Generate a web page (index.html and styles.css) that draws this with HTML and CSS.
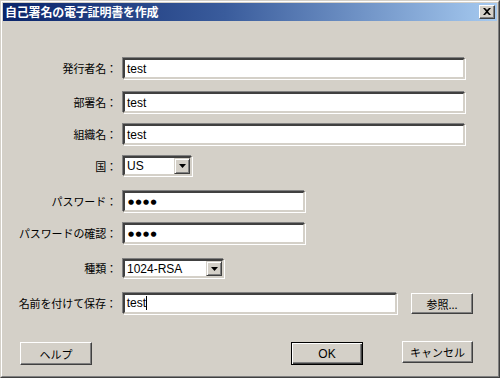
FILE: index.html
```html
<!DOCTYPE html>
<html lang="ja">
<head>
<meta charset="utf-8">
<title>自己署名の電子証明書を作成</title>
<link rel="stylesheet" href="styles.css">
</head>
<body>
<div class="window">
  <div class="frame">
    <div class="titlebar">
      <span class="title">自己署名の電子証明書を作成</span>
      <span class="close" aria-label="閉じる">
        <svg width="8" height="7" viewBox="0 0 8 7"><path d="M0 0h2l2 2 2-2h2L5 3.5 8 7H6L4 5 2 7H0l3-3.5z" fill="#000"/></svg>
      </span>
    </div>
    <div class="content">
      <div class="form">
        <div class="row">
          <label class="lbl">発行者名：</label>
          <div class="field w-full"><span class="val">test</span></div>
        </div>
        <div class="row mt2">
          <label class="lbl">部署名：</label>
          <div class="field w-full"><span class="val">test</span></div>
        </div>
        <div class="row">
          <label class="lbl">組織名：</label>
          <div class="field w-full"><span class="val">test</span></div>
        </div>
        <div class="row">
          <label class="lbl">国：</label>
          <div class="combo w-country">
            <span class="val">US</span>
            <span class="arrow"><svg width="7" height="4" viewBox="0 0 7 4"><path d="M0 0h7L3.5 4z" fill="#000"/></svg></span>
          </div>
        </div>
        <div class="row mt4">
          <label class="lbl">パスワード：</label>
          <div class="field w-pass"><span class="dots">●●●●</span></div>
        </div>
        <div class="row">
          <label class="lbl">パスワードの確認：</label>
          <div class="field w-pass"><span class="dots">●●●●</span></div>
        </div>
        <div class="row mt4">
          <label class="lbl">種類：</label>
          <div class="combo w-type short">
            <span class="val">1024-RSA</span>
            <span class="arrow"><svg width="7" height="4" viewBox="0 0 7 4"><path d="M0 0h7L3.5 4z" fill="#000"/></svg></span>
          </div>
        </div>
        <div class="row mt3">
          <label class="lbl">名前を付けて保存：</label>
          <div class="field w-save"><span class="val">test</span><span class="caret"></span></div>
          <button class="btn browse">参照...</button>
        </div>
      </div>
      <div class="actions">
        <button class="btn">ヘルプ</button>
        <div class="spacer"></div>
        <button class="btn default">OK</button>
        <button class="btn cancel">キャンセル</button>
      </div>
    </div>
  </div>
</div>
</body>
</html>
```
FILE: styles.css
```css
* { box-sizing: border-box; }
html, body { margin: 0; padding: 0; }
body {
  width: 500px;
  height: 378px;
  background: #d4d0c8;
  font-family: "Noto Sans CJK JP", "Liberation Sans", sans-serif;
  font-size: 11px;
  color: #000;
  overflow: hidden;
}
.window {
  width: 500px;
  height: 378px;
  border: 1px solid;
  border-color: #d4d0c8 #404040 #404040 #d4d0c8;
}
.frame {
  height: 100%;
  border: 1px solid;
  border-color: #fff #808080 #808080 #fff;
  padding: 1px;
  display: flex;
  flex-direction: column;
}
.titlebar {
  height: 18px;
  flex: none;
  background: linear-gradient(to right, #0a246a 0%, #3a5c9c 45%, #a6caf0 100%);
  display: flex;
  align-items: center;
  padding: 0 2px 0 2px;
}
.title {
  flex: 1;
  color: #fff;
  font-weight: bold;
  font-size: 12px;
  line-height: 18px;
  white-space: nowrap;
  letter-spacing: -0.2px;
}
.close {
  width: 16px;
  height: 14px;
  background: #d4d0c8;
  border: 1px solid;
  border-color: #fff #404040 #404040 #fff;
  box-shadow: inset -1px -1px 0 #808080;
  display: flex;
  align-items: center;
  justify-content: center;
  padding-bottom: 1px;
}
.close svg { display: block; }
.content {
  flex: 1;
  display: flex;
  flex-direction: column;
  padding: 36px 24px 10px 17px;
}
.form {
  display: flex;
  flex-direction: column;
  gap: 10px;
}
.row {
  display: flex;
  align-items: center;
}
.mt2 { margin-top: 2px; }
.mt3 { margin-top: 3px; }
.mt4 { margin-top: 4px; }
.lbl {
  width: 99px;
  margin-left: -2px;
  margin-right: 5px;
  text-align: right;
  white-space: nowrap;
  font-size: 11px;
  letter-spacing: -0.1px;
  line-height: 14px;
}
.field, .combo {
  height: 22px;
  background: #fff;
  border: 2px solid;
  border-color: #404040 #d4d0c8 #d4d0c8 #404040;
  box-shadow: -1px -1px 0 #808080, 1px 1px 0 #fff;
  display: flex;
  align-items: center;
  padding-left: 2px;
  font-family: "Liberation Sans", "DejaVu Sans", sans-serif;
  font-size: 12px;
}
.field { margin: 1px 0 0 1px; height: 21px; }
.w-full { width: 342px; }
.w-pass { width: 182px; }
.w-save { width: 275px; }
.combo {
  margin: 1px 0 0 1px;
  height: 20px;
  padding-right: 0;
}
.combo.short { height: 19px; }
.w-country { width: 69px; }
.w-type { width: 101px; }
.combo .val { flex: 1; }
.arrow {
  width: 16px;
  height: 100%;
  background: #d4d0c8;
  border: 1px solid;
  border-color: #d4d0c8 #404040 #404040 #d4d0c8;
  box-shadow: inset 1px 1px 0 #fff, inset -1px -1px 0 #808080;
  display: flex;
  align-items: center;
  justify-content: center;
}
.arrow svg { display: block; }
.val { line-height: 14px; }
.dots {
  font-family: "DejaVu Sans", sans-serif;
  font-size: 7px;
  letter-spacing: 1.4px;
  line-height: 10px;
  padding-left: 1px;
}
.caret {
  display: inline-block;
  width: 1px;
  height: 14px;
  background: #000;
  margin-left: 0;
}
.btn {
  height: 23px;
  width: 72px;
  padding: 0;
  margin: 0;
  background: #d4d0c8;
  border: 1px solid;
  border-color: #fff #404040 #404040 #fff;
  box-shadow: inset -1px -1px 0 #808080;
  font-family: "Noto Sans CJK JP", "Liberation Sans", sans-serif;
  font-size: 11px;
  color: #000;
  line-height: 14px;
}
.browse {
  width: 62px;
  height: 21px;
  margin-left: 14px;
  margin-top: 2px;
}
.actions {
  margin-top: auto;
  display: flex;
  align-items: flex-start;
}
.spacer { flex: 1; }
.default {
  border: 1px solid #000;
  box-shadow: inset 1px 1px 0 #fff, inset -1px -1px 0 #404040, inset -2px -2px 0 #808080;
  font-family: "Liberation Sans", sans-serif;
  font-size: 12px;
}
.cancel {
  width: 71px;
  height: 22px;
  margin-left: 39px;
  margin-top: -1px;
}
```
